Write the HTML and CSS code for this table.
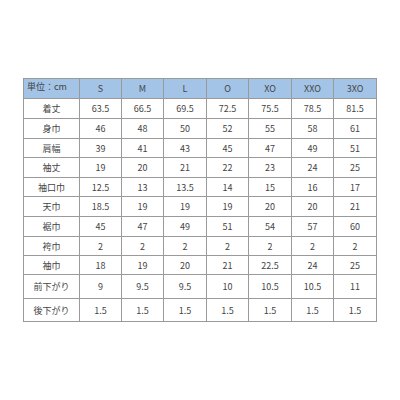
FILE: index.html
```html
<!DOCTYPE html>
<html lang="ja">
<head>
<meta charset="utf-8">
<link rel="stylesheet" href="styles.css">
</head>
<body>
<div class="page">
<table class="size">
<colgroup>
<col class="c-label"><col class="c1"><col class="c2"><col class="c3"><col class="c4"><col class="c5"><col class="c6"><col class="c7">
</colgroup>
<thead>
<tr class="h"><th class="unit">単位：cm</th><th>S</th><th>M</th><th>L</th><th>O</th><th>XO</th><th>XXO</th><th>3XO</th></tr>
</thead>
<tbody>
<tr class="r20"><td>着丈</td><td>63.5</td><td>66.5</td><td>69.5</td><td>72.5</td><td>75.5</td><td>78.5</td><td>81.5</td></tr>
<tr class="r20"><td>身巾</td><td>46</td><td>48</td><td>50</td><td>52</td><td>55</td><td>58</td><td>61</td></tr>
<tr class="r19"><td>肩幅</td><td>39</td><td>41</td><td>43</td><td>45</td><td>47</td><td>49</td><td>51</td></tr>
<tr class="r20"><td>袖丈</td><td>19</td><td>20</td><td>21</td><td>22</td><td>23</td><td>24</td><td>25</td></tr>
<tr class="r19"><td>袖口巾</td><td>12.5</td><td>13</td><td>13.5</td><td>14</td><td>15</td><td>16</td><td>17</td></tr>
<tr class="r20"><td>天巾</td><td>18.5</td><td>19</td><td>19</td><td>19</td><td>20</td><td>20</td><td>21</td></tr>
<tr class="r20"><td>裾巾</td><td>45</td><td>47</td><td>49</td><td>51</td><td>54</td><td>57</td><td>60</td></tr>
<tr class="r19"><td>袴巾</td><td>2</td><td>2</td><td>2</td><td>2</td><td>2</td><td>2</td><td>2</td></tr>
<tr class="r19"><td>袖巾</td><td>18</td><td>19</td><td>20</td><td>21</td><td>22.5</td><td>24</td><td>25</td></tr>
<tr class="r24"><td>前下がり</td><td>9</td><td>9.5</td><td>9.5</td><td>10</td><td>10.5</td><td>10.5</td><td>11</td></tr>
<tr class="r23"><td>後下がり</td><td>1.5</td><td>1.5</td><td>1.5</td><td>1.5</td><td>1.5</td><td>1.5</td><td>1.5</td></tr>
</tbody>
</table>
</div>
</body>
</html>
```
FILE: styles.css
```css
html, body {
  margin: 0;
  padding: 0;
  background: #ffffff;
}
.page {
  padding: 78px 0 0 23px;
}
.size {
  border-collapse: collapse;
  table-layout: fixed;
  width: 353px;
  font-family: "Noto Sans CJK JP", "Noto Sans", sans-serif;
  font-size: 9px;
  color: #444444;
}
.c-label { width: 56px; }
.c1, .c2, .c4, .c6 { width: 42px; }
.c3, .c5, .c7 { width: 43px; }
.size th, .size td {
  border: 1px solid #9a9a9a;
  padding: 0;
  text-align: center;
  vertical-align: middle;
  font-weight: normal;
  line-height: 1;
  overflow: hidden;
  white-space: nowrap;
}
.size thead th {
  background: #a3c4e7;
}
.size th.unit {
  text-align: left;
  vertical-align: top;
  padding: 3px 0 0 3px;
}
.h { height: 20px; }
.r20 { height: 20px; }
.r19 { height: 19px; }
.r24 { height: 24px; }
.r23 { height: 23px; }
```
